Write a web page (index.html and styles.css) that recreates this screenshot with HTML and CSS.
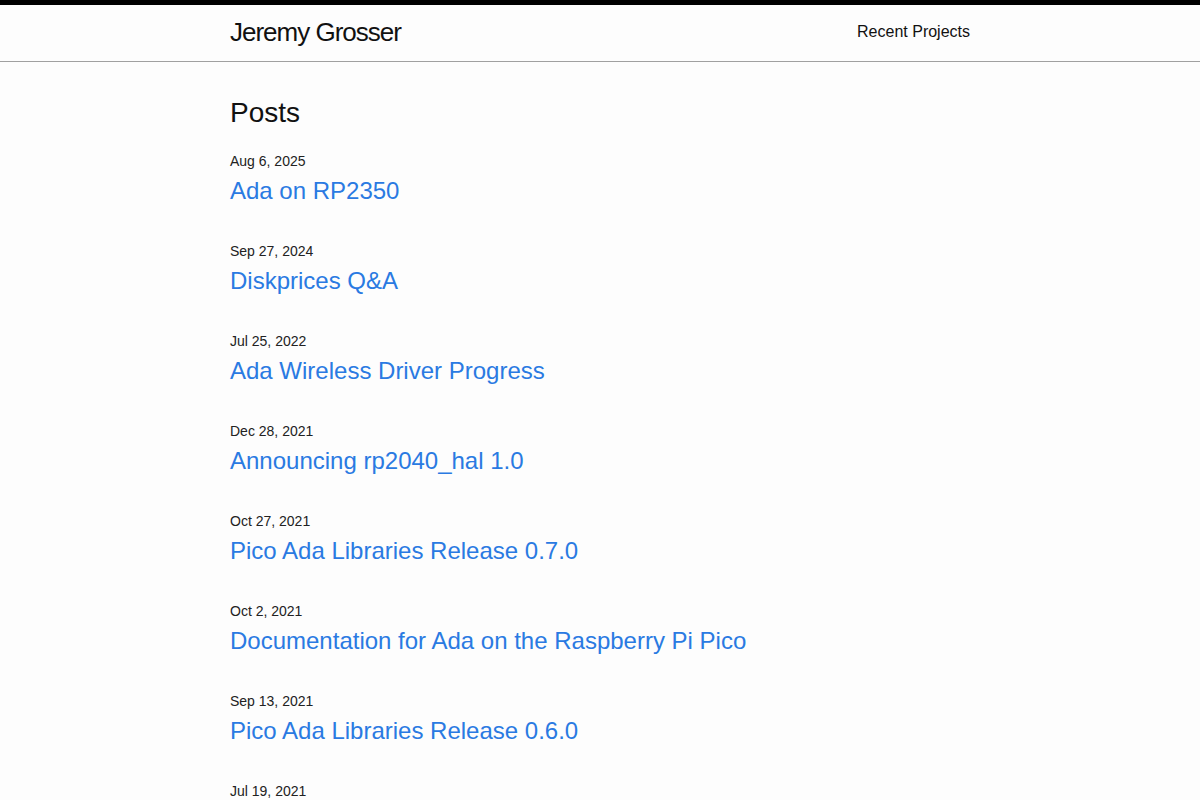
FILE: index.html
```html
<!DOCTYPE html>
<html lang="en">
  <head>
    <meta charset="UTF-8">
    <meta name="viewport" content="width=device-width, initial-scale=1">
    <title>Jeremy Grosser</title>
    <link rel="stylesheet" href="styles.css">
  </head>
  <body>
    <header class="site-header">
      <div class="wrapper header-inner">
        <a class="site-title" href="#">Jeremy Grosser</a>
        <nav class="site-nav">
          <a class="page-link" href="#">Recent Projects</a>
        </nav>
      </div>
    </header>

    <main class="page-content">
      <div class="wrapper">
        <h2 class="post-list-heading">Posts</h2>
        <ul class="post-list">
          <li>
            <span class="post-meta">Aug 6, 2025</span>
            <h3><a class="post-link" href="#">Ada on RP2350</a></h3>
          </li>
          <li>
            <span class="post-meta">Sep 27, 2024</span>
            <h3><a class="post-link" href="#">Diskprices Q&amp;A</a></h3>
          </li>
          <li>
            <span class="post-meta">Jul 25, 2022</span>
            <h3><a class="post-link" href="#">Ada Wireless Driver Progress</a></h3>
          </li>
          <li>
            <span class="post-meta">Dec 28, 2021</span>
            <h3><a class="post-link" href="#">Announcing rp2040_hal 1.0</a></h3>
          </li>
          <li>
            <span class="post-meta">Oct 27, 2021</span>
            <h3><a class="post-link" href="#">Pico Ada Libraries Release 0.7.0</a></h3>
          </li>
          <li>
            <span class="post-meta">Oct 2, 2021</span>
            <h3><a class="post-link" href="#">Documentation for Ada on the Raspberry Pi Pico</a></h3>
          </li>
          <li>
            <span class="post-meta">Sep 13, 2021</span>
            <h3><a class="post-link" href="#">Pico Ada Libraries Release 0.6.0</a></h3>
          </li>
          <li>
            <span class="post-meta">Jul 19, 2021</span>
          </li>
        </ul>
      </div>
    </main>
  </body>
</html>
```

FILE: styles.css
```css
html,
body {
  margin: 0;
  padding: 0;
}

body {
  font-family: "Liberation Sans", Arial, sans-serif;
  font-size: 16px;
  line-height: 1.5;
  color: #111;
  background-color: #fdfdfd;
}

a {
  text-decoration: none;
}

.wrapper {
  max-width: 740px;
  margin: 0 auto;
  padding: 0 30px;
}

.site-header {
  border-top: 5px solid #000;
  border-bottom: 1px solid #a0a0a0;
  min-height: 56px;
}

.header-inner {
  display: flex;
  justify-content: space-between;
  align-items: center;
}

.site-title {
  font-size: 26px;
  line-height: 54px;
  letter-spacing: -1px;
  color: #111;
}

.page-link {
  color: #111;
  line-height: 54px;
}

.page-content {
  padding: 30px 0;
}

.post-list-heading {
  font-size: 28px;
  font-weight: normal;
  margin: 0 0 17px;
  line-height: 1.5;
}

.post-list {
  list-style: none;
  margin: 0;
  padding: 0;
}

.post-list > li {
  margin-bottom: 31px;
}

.post-meta {
  display: block;
  font-size: 14px;
  color: #222;
  line-height: 21px;
}

.post-list h3 {
  margin: 0;
  font-weight: normal;
}

.post-link {
  display: block;
  font-size: 24px;
  line-height: 38px;
  color: #2a7ae2;
}
```
